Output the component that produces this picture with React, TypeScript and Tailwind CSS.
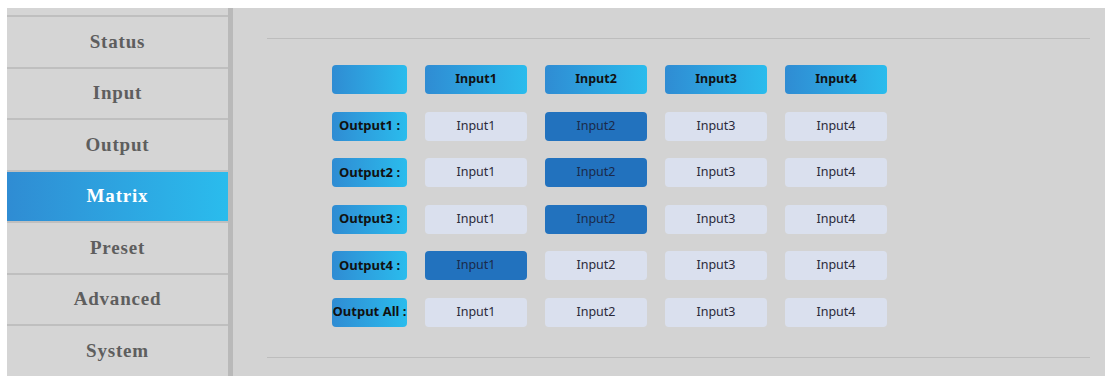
import { useState } from "react";

const menu = ["Status", "Input", "Output", "Matrix", "Preset", "Advanced", "System"];
const outputs = ["Output1 :", "Output2 :", "Output3 :", "Output4 :", "Output All :"];
const inputs = ["Input1", "Input2", "Input3", "Input4"];

export default function App() {
  // selected input index per output row (-1 = none)
  const [routes, setRoutes] = useState<number[]>([1, 1, 1, 0, -1]);

  const pick = (row: number, col: number) => {
    if (row === 4) {
      setRoutes([col, col, col, col, -1]);
      return;
    }
    setRoutes((prev) => prev.map((v, i) => (i === row ? col : v)));
  };

  return (
    <div className="w-[1105px] h-[376px] overflow-hidden bg-white pt-2 pl-[7px] flex">
      {/* Sidebar */}
      <div className="w-[221px] bg-[#d5d5d5] pt-[7px] flex flex-col shrink-0">
        {menu.map((m) => (
          <div
            key={m}
            className={`h-[51.5px] shrink-0 border-t-2 border-[#bfbfbf] flex items-center justify-center font-bold text-[19px] tracking-[0.8px] ${
              m === "Matrix" ? "bg-gradient-to-r from-[#2f8cd3] to-[#2abced] text-white" : "text-[#5e5e5e]"
            }`}
            style={{ fontFamily: '"Liberation Serif", "Times New Roman", serif' }}
          >
            {m}
          </div>
        ))}
      </div>
      <div className="w-[5px] bg-[#b9b9b9] shrink-0" />

      {/* Content */}
      <div className="flex-1 bg-[#d3d3d3] pl-[34px] pr-[15px] pt-[30px]" style={{ fontFamily: '"Noto Sans", "Open Sans", sans-serif' }}>
        <div className="h-px bg-[#bdbdbd]" />
        <div className="pl-[65px] pt-[26px] flex flex-col gap-[17.5px]">
          <div className="flex gap-[18px]">
            <div className="w-[75px] h-[29px] rounded-[4px] bg-gradient-to-r from-[#2f8cd3] to-[#2abced]" />
            {inputs.map((inp) => (
              <div
                key={inp}
                className="w-[102px] h-[29px] rounded-[4px] bg-gradient-to-r from-[#2f8cd3] to-[#2abced] flex items-center justify-center text-[12.5px] font-bold text-[#111]"
              >
                {inp}
              </div>
            ))}
          </div>
          {outputs.map((out, r) => (
            <div key={out} className="flex gap-[18px]">
              <div className="w-[75px] h-[29px] rounded-[4px] bg-gradient-to-r from-[#2f8cd3] to-[#2abced] flex items-center justify-center text-[13px] font-bold text-[#111] whitespace-nowrap">
                {out}
              </div>
              {inputs.map((inp, c) => (
                <button
                  key={inp}
                  onClick={() => pick(r, c)}
                  className={`w-[102px] h-[29px] rounded-[4px] flex items-center justify-center text-[12.5px] ${
                    routes[r] === c ? "bg-[#2272be] text-[#1b2a4a]" : "bg-[#dae0ee] text-[#2a2a3a]"
                  }`}
                >
                  {inp}
                </button>
              ))}
            </div>
          ))}
        </div>
        <div className="h-px bg-[#bdbdbd] mt-[30px]" />
      </div>
    </div>
  );
}
